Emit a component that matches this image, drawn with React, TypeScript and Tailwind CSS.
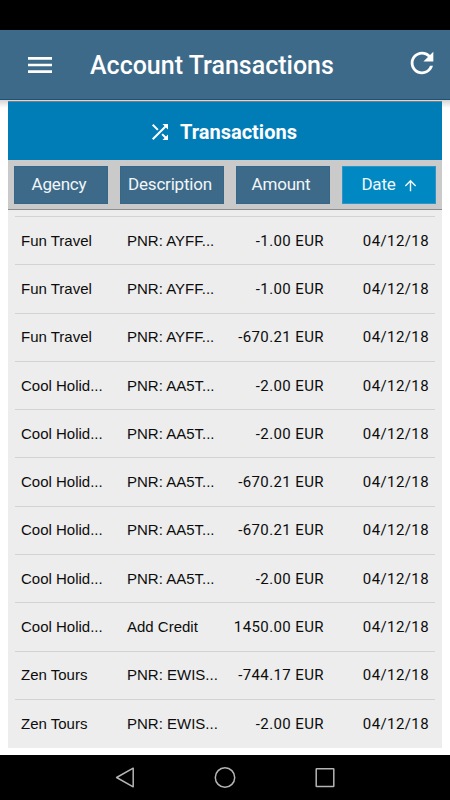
import React from "react";
import {
  MdArrowUpward,
  MdMenu,
  MdRefresh,
  MdShuffle,
} from "react-icons/md";

interface ITransaction {
  agency: string;
  description: string;
  amount: string;
  date: string;
}

const transactions: ITransaction[] = [
  { agency: "Fun Travel", description: "PNR: AYFF...", amount: "-1.00 EUR", date: "04/12/18" },
  { agency: "Fun Travel", description: "PNR: AYFF...", amount: "-1.00 EUR", date: "04/12/18" },
  { agency: "Fun Travel", description: "PNR: AYFF...", amount: "-670.21 EUR", date: "04/12/18" },
  { agency: "Cool Holid...", description: "PNR: AA5T...", amount: "-2.00 EUR", date: "04/12/18" },
  { agency: "Cool Holid...", description: "PNR: AA5T...", amount: "-2.00 EUR", date: "04/12/18" },
  { agency: "Cool Holid...", description: "PNR: AA5T...", amount: "-670.21 EUR", date: "04/12/18" },
  { agency: "Cool Holid...", description: "PNR: AA5T...", amount: "-670.21 EUR", date: "04/12/18" },
  { agency: "Cool Holid...", description: "PNR: AA5T...", amount: "-2.00 EUR", date: "04/12/18" },
  { agency: "Cool Holid...", description: "Add Credit", amount: "1450.00 EUR", date: "04/12/18" },
  { agency: "Zen Tours", description: "PNR: EWIS...", amount: "-744.17 EUR", date: "04/12/18" },
  { agency: "Zen Tours", description: "PNR: EWIS...", amount: "-2.00 EUR", date: "04/12/18" },
];

const Header = () => (
  <header className="flex h-[70px] shrink-0 items-center border-b border-[#1b5377] bg-[#3e6a89] pl-6 pr-[11px] text-white">
    <button aria-label="Menu" className="pt-px">
      <MdMenu size={32} />
    </button>
    <h1 className="ml-[34px] flex-1 whitespace-nowrap pt-0.5 text-[25px] font-medium">
      Account Transactions
    </h1>
    <button aria-label="Refresh" className="-mt-[3px]">
      <MdRefresh size={34} />
    </button>
  </header>
);

const SortBar = () => (
  <div className="flex h-[50px] shrink-0 items-start justify-between border-b border-[#8d8d8d] bg-[#cacaca] px-1.5 pt-1.5 text-[17px] tracking-[-0.2px] text-[#f1f6fa]">
    <button className="h-[38px] w-[94px] border border-[#376788] bg-[#3e6a89] pr-1">Agency</button>
    <button className="h-[38px] w-[104px] border border-[#376788] bg-[#3e6a89] pr-1">Description</button>
    <button className="h-[38px] w-[94px] border border-[#376788] bg-[#3e6a89] pr-1">Amount</button>
    <button className="flex h-[38px] w-[94px] items-center justify-center gap-1.5 border border-[#2f93c6] bg-[#0088c2] pl-0.5">
      Date
      <MdArrowUpward size={17} />
    </button>
  </div>
);

const TransactionRow = ({ agency, description, amount, date }: ITransaction) => (
  <li className="flex h-[48.3px] items-center border-t border-[#d3d3d3] pl-[6px] pr-1.5 pt-[0.5px] text-[15px] text-[#0c0c0c]">
    <span className="w-[106px] font-['Liberation_Sans',sans-serif]">{agency}</span>
    <span className="w-[96px] font-['Liberation_Sans',sans-serif]">{description}</span>
    <span className="w-[101px] text-right tracking-[0.4px]">{amount}</span>
    <span className="flex-1 text-right tracking-[0.4px]">{date}</span>
  </li>
);

const NavigationBar = () => (
  <nav className="flex h-[45px] shrink-0 items-center justify-center bg-black">
    <svg width="220" height="24" viewBox="0 0 220 24" fill="none" stroke="#b5b5b5" strokeWidth="1.5" strokeLinejoin="round">
      <path d="M18.2 2.2v18.6L1.6 11.5z" />
      <circle cx="110" cy="11.5" r="9.7" />
      <rect x="201.2" y="2.8" width="17.6" height="17.6" rx="0.5" />
    </svg>
  </nav>
);

export default function App() {
  return (
    <div className="flex h-[800px] w-[450px] flex-col overflow-hidden bg-white font-['Roboto',sans-serif]">
      <div className="h-[30px] shrink-0 bg-black" />
      <Header />
      <main className="flex min-h-0 flex-1 flex-col bg-linear-to-b from-[#d5d5d5] to-white to-[8px] px-2 pb-[7px]">
        <div className="mt-px flex h-[59px] shrink-0 items-center justify-center gap-2 border-t border-[#777f86] bg-[#007cb7] pr-[5px] pt-0.5 text-white">
          <MdShuffle size={24} />
          <h2 className="text-[20px] font-bold">Transactions</h2>
        </div>
        <SortBar />
        <ul className="flex min-h-0 flex-1 flex-col overflow-hidden bg-[#ededed] px-[7px] pt-1.5">
          {transactions.map((transaction, index) => (
            <TransactionRow key={index} {...transaction} />
          ))}
        </ul>
      </main>
      <NavigationBar />
    </div>
  );
}
